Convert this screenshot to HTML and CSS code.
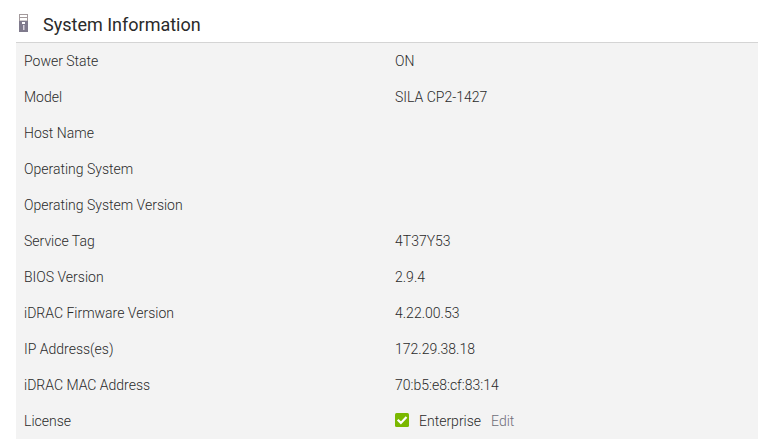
FILE: index.html
```html
<!DOCTYPE html>
<html lang="en">
<head>
<meta charset="utf-8">
<title>System Information</title>
<link rel="stylesheet" href="styles.css">
</head>
<body>
<section class="panel">
  <header class="panel-header">
    <svg class="server-icon" viewBox="0 0 9 18" aria-hidden="true">
      <path fill="#a39a9c" d="M0 0h9v7H0z"/>
      <path fill="#7f7a8c" d="M0 7h9v11H0z"/>
      <path fill="#fff" d="M1 1h7v2H1zM1 4h7v2.500H1zM3 8h3v2H3z"/>
      <path fill="#d8d2dc" d="M4 11h1.500v5H4z"/>
    </svg>
    <h1 class="panel-title">System Information</h1>
  </header>
  <table class="info">
    <tbody>
      <tr><th scope="row">Power State</th><td>ON</td></tr>
      <tr><th scope="row">Model</th><td>SILA CP2-1427</td></tr>
      <tr><th scope="row">Host Name</th><td></td></tr>
      <tr><th scope="row">Operating System</th><td></td></tr>
      <tr><th scope="row">Operating System Version</th><td></td></tr>
      <tr><th scope="row">Service Tag</th><td>4T37Y53</td></tr>
      <tr><th scope="row">BIOS Version</th><td>2.9.4</td></tr>
      <tr><th scope="row">iDRAC Firmware Version</th><td>4.22.00.53</td></tr>
      <tr><th scope="row">IP Address(es)</th><td>172.29.38.18</td></tr>
      <tr><th scope="row">iDRAC MAC Address</th><td>70:b5:e8:cf:83:14</td></tr>
      <tr>
        <th scope="row">License</th>
        <td>
          <div class="license">
            <svg class="check-icon" viewBox="0 0 14 14" aria-hidden="true">
              <rect width="14" height="14" rx="1.5" fill="#7ab800"/>
              <path d="M2.700 6.700l3.200 3.200 5.600-5.800" fill="none" stroke="#fff" stroke-width="2.2"/>
            </svg>
            <span>Enterprise</span>
            <a class="edit" href="#edit">Edit</a>
          </div>
        </td>
      </tr>
    </tbody>
  </table>
</section>
</body>
</html>
```
FILE: styles.css
```css
body {
  margin: 0;
  background: #fff;
  color: #2a2a2a;
  font: 300 14px/20px Roboto, "Liberation Sans", sans-serif;
}

.panel {
  margin: 0 8px 0 16px;
}

.panel-header {
  display: flex;
  align-items: flex-start;
  gap: 15px;
  padding: 9px 0 1px 3px;
  border-bottom: 1px solid #d4d4d4;
}

.server-icon {
  width: 9px;
  height: 18px;
  margin-top: 5px;
}

.panel-title {
  margin: 0;
  color: #2a2a2a;
  font-size: 18px;
  font-weight: 400;
  line-height: 32px;
}

.info {
  width: 100%;
  table-layout: fixed;
  border-collapse: collapse;
  background: #f3f3f3;
}

.info th,
.info td {
  height: 20px;
  padding: 8px;
  text-align: left;
  font-weight: 300;
}

.license {
  display: flex;
  align-items: center;
  gap: 10px;
}

.check-icon {
  width: 14px;
  height: 14px;
  margin-bottom: 2px;
}

.edit {
  color: #6e6e78;
  text-decoration: none;
}
```
